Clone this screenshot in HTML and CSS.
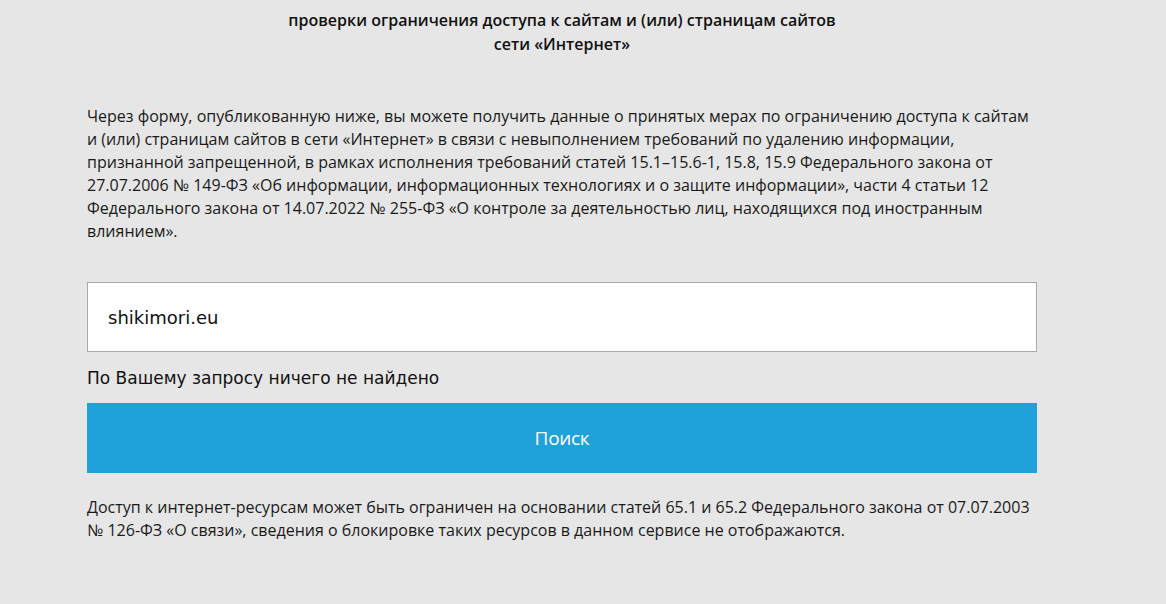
FILE: index.html
```html
<!DOCTYPE html>
<html lang="ru">
<head>
<meta charset="utf-8">
<title>Проверка ограничения доступа</title>
<link rel="stylesheet" href="styles.css">
</head>
<body>
<div class="page">
  <h1 class="title">проверки ограничения доступа к сайтам и (или) страницам сайтов<br>сети «Интернет»</h1>
  <p class="intro">Через форму, опубликованную ниже, вы можете получить данные о принятых мерах по ограничению доступа к сайтам и (или) страницам сайтов в сети «Интернет» в связи с невыполнением требований по удалению информации, признанной запрещенной, в рамках исполнения требований статей 15.1–15.6-1, 15.8, 15.9 Федерального закона от 27.07.2006 № 149-ФЗ «Об информации, информационных технологиях и о защите информации», части 4 статьи 12 Федерального закона от 14.07.2022 № 255-ФЗ «О контроле за деятельностью лиц, находящихся под иностранным влиянием».</p>
  <form class="form">
    <input class="field" type="text" value="shikimori.eu">
    <div class="result">По Вашему запросу ничего не найдено</div>
    <button class="btn" type="button">Поиск</button>
  </form>
  <p class="note">Доступ к интернет-ресурсам может быть ограничен на основании статей 65.1 и 65.2 Федерального закона от 07.07.2003 № 126-ФЗ «О связи», сведения о блокировке таких ресурсов в данном сервисе не отображаются.</p>
</div>
</body>
</html>
```

FILE: styles.css
```css
html, body {
  margin: 0;
  padding: 0;
  background: #e6e6e6;
}
body {
  font-family: "Open Sans", sans-serif;
  color: #111;
}
.page {
  width: 950px;
  margin: 0 0 0 87px;
  padding-top: 8px;
}
.title {
  margin: 0;
  font-size: 16px;
  font-weight: 600;
  line-height: 24px;
  text-align: center;
}
.intro {
  margin: 49px 0 0 0;
  font-size: 16px;
  line-height: 23px;
  color: #1a1a1a;
}
.form {
  margin-top: 39px;
  display: flex;
  flex-direction: column;
}
.field {
  box-sizing: border-box;
  width: 950px;
  height: 70px;
  border: 1px solid #a9a9a9;
  background: #fff;
  padding: 0 20px;
  font-family: "DejaVu Sans", sans-serif;
  font-size: 18px;
  color: #111;
  outline: none;
  margin: 0;
}
.result {
  font-family: "DejaVu Sans", sans-serif;
  font-size: 17px;
  line-height: 24px;
  margin-top: 14px;
  color: #111;
}
.btn {
  margin-top: 13px;
  width: 950px;
  height: 70px;
  border: 0;
  background: #1fa1da;
  color: #fff;
  font-family: "Open Sans", sans-serif;
  font-size: 19px;
  letter-spacing: -0.3px;
  cursor: pointer;
  padding: 0;
}
.note {
  margin: 23px 0 0 0;
  font-size: 16px;
  line-height: 23px;
  color: #1a1a1a;
}
```
